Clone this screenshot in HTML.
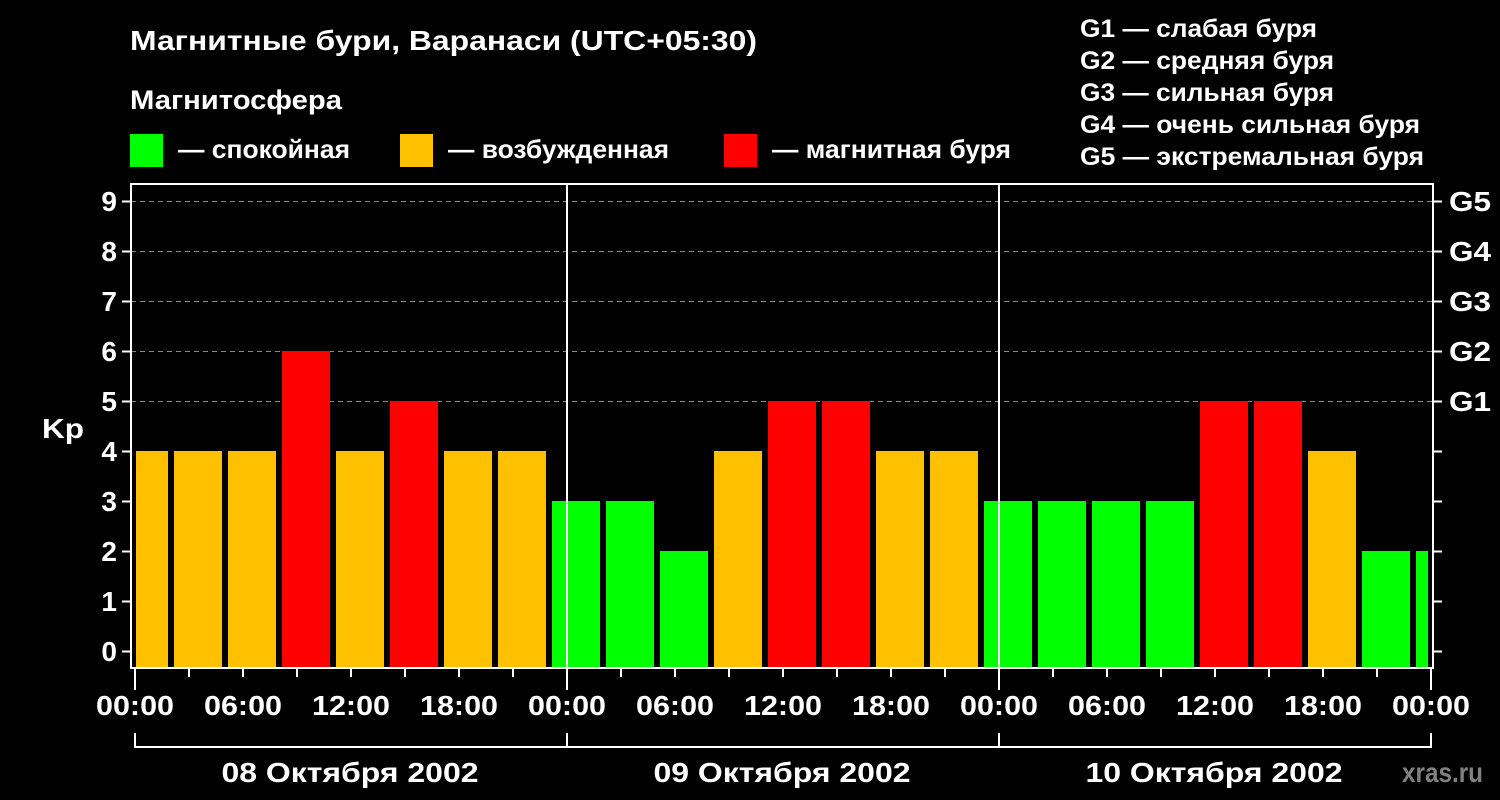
<!DOCTYPE html>
<html><head><meta charset="utf-8"><style>
body{margin:0;background:#000;width:1500px;height:800px;overflow:hidden}
svg{display:block}
text{font-family:"Liberation Sans",sans-serif;font-weight:bold;fill:#fff}
</style></head><body>
<svg width="1500" height="800" xmlns="http://www.w3.org/2000/svg">
<text x="130" y="50" font-size="28" textLength="627" lengthAdjust="spacingAndGlyphs">Магнитные бури, Варанаси (UTC+05:30)</text>
<text x="130" y="109" font-size="27" textLength="212" lengthAdjust="spacingAndGlyphs">Магнитосфера</text>
<rect x="130" y="134" width="33" height="33" fill="#00ff00"/>
<text x="178" y="158" font-size="26" textLength="172" lengthAdjust="spacingAndGlyphs">— спокойная</text>
<rect x="400" y="134" width="33" height="33" fill="#ffc000"/>
<text x="448" y="158" font-size="26" textLength="221" lengthAdjust="spacingAndGlyphs">— возбужденная</text>
<rect x="724" y="134" width="33" height="33" fill="#ff0000"/>
<text x="772" y="158" font-size="26" textLength="239" lengthAdjust="spacingAndGlyphs">— магнитная буря</text>
<g font-size="25" lengthAdjust="spacingAndGlyphs">
<text x="1080" y="37" textLength="237" lengthAdjust="spacingAndGlyphs">G1 — слабая буря</text>
<text x="1080" y="69" textLength="254" lengthAdjust="spacingAndGlyphs">G2 — средняя буря</text>
<text x="1080" y="101" textLength="254" lengthAdjust="spacingAndGlyphs">G3 — сильная буря</text>
<text x="1080" y="133" textLength="340" lengthAdjust="spacingAndGlyphs">G4 — очень сильная буря</text>
<text x="1080" y="165" textLength="344" lengthAdjust="spacingAndGlyphs">G5 — экстремальная буря</text>
</g>
<g stroke="#888" stroke-width="1" stroke-dasharray="5,4">
<line x1="131" y1="201.5" x2="1432" y2="201.5"/>
<line x1="131" y1="251.5" x2="1432" y2="251.5"/>
<line x1="131" y1="301.5" x2="1432" y2="301.5"/>
<line x1="131" y1="351.5" x2="1432" y2="351.5"/>
<line x1="131" y1="401.5" x2="1432" y2="401.5"/>
</g>
<g>
<rect x="136" y="451" width="32" height="217" fill="#ffc000"/>
<rect x="174" y="451" width="48" height="217" fill="#ffc000"/>
<rect x="228" y="451" width="48" height="217" fill="#ffc000"/>
<rect x="282" y="351" width="48" height="317" fill="#ff0000"/>
<rect x="336" y="451" width="48" height="217" fill="#ffc000"/>
<rect x="390" y="401" width="48" height="267" fill="#ff0000"/>
<rect x="444" y="451" width="48" height="217" fill="#ffc000"/>
<rect x="498" y="451" width="48" height="217" fill="#ffc000"/>
<rect x="552" y="501" width="48" height="167" fill="#00ff00"/>
<rect x="606" y="501" width="48" height="167" fill="#00ff00"/>
<rect x="660" y="551" width="48" height="117" fill="#00ff00"/>
<rect x="714" y="451" width="48" height="217" fill="#ffc000"/>
<rect x="768" y="401" width="48" height="267" fill="#ff0000"/>
<rect x="822" y="401" width="48" height="267" fill="#ff0000"/>
<rect x="876" y="451" width="48" height="217" fill="#ffc000"/>
<rect x="930" y="451" width="48" height="217" fill="#ffc000"/>
<rect x="984" y="501" width="48" height="167" fill="#00ff00"/>
<rect x="1038" y="501" width="48" height="167" fill="#00ff00"/>
<rect x="1092" y="501" width="48" height="167" fill="#00ff00"/>
<rect x="1146" y="501" width="48" height="167" fill="#00ff00"/>
<rect x="1200" y="401" width="48" height="267" fill="#ff0000"/>
<rect x="1254" y="401" width="48" height="267" fill="#ff0000"/>
<rect x="1308" y="451" width="48" height="217" fill="#ffc000"/>
<rect x="1362" y="551" width="48" height="117" fill="#00ff00"/>
<rect x="1416" y="551" width="12" height="117" fill="#00ff00"/>
</g>
<g stroke="#fff" stroke-width="2" fill="none">
<rect x="131" y="184" width="1302" height="484"/>
<line x1="567" y1="184" x2="567" y2="690"/>
<line x1="999" y1="184" x2="999" y2="690"/>
<line x1="135" y1="668" x2="135" y2="690"/>
<line x1="1431" y1="668" x2="1431" y2="690"/>
<path d="M135 733V747H1431V733M567 733V747M999 733V747"/>
<path d="M189 668v9M243 668v9M297 668v9M351 668v9M405 668v9M459 668v9M513 668v9M621 668v9M675 668v9M729 668v9M783 668v9M837 668v9M891 668v9M945 668v9M1053 668v9M1107 668v9M1161 668v9M1215 668v9M1269 668v9M1323 668v9M1377 668v9"/>
<path d="M122 201.5h9M122 251.5h9M122 301.5h9M122 351.5h9M122 401.5h9M122 451.5h9M122 501.5h9M122 551.5h9M122 601.5h9M122 651.5h9"/>
<path d="M1433 201.5h9M1433 251.5h9M1433 301.5h9M1433 351.5h9M1433 401.5h9M1433 451.5h9M1433 501.5h9M1433 551.5h9M1433 601.5h9M1433 651.5h9"/>
</g>
<g font-size="28" text-anchor="end">
<text x="117" y="211">9</text><text x="117" y="261">8</text><text x="117" y="311">7</text>
<text x="117" y="361">6</text><text x="117" y="411">5</text><text x="117" y="461">4</text>
<text x="117" y="511">3</text><text x="117" y="561">2</text><text x="117" y="611">1</text>
<text x="117" y="661">0</text>
</g>
<text x="42" y="438" font-size="28" textLength="42" lengthAdjust="spacingAndGlyphs">Kp</text>
<g font-size="28">
<text x="1449" y="211" textLength="42" lengthAdjust="spacingAndGlyphs">G5</text>
<text x="1449" y="261" textLength="42" lengthAdjust="spacingAndGlyphs">G4</text>
<text x="1449" y="311" textLength="42" lengthAdjust="spacingAndGlyphs">G3</text>
<text x="1449" y="361" textLength="42" lengthAdjust="spacingAndGlyphs">G2</text>
<text x="1449" y="411" textLength="42" lengthAdjust="spacingAndGlyphs">G1</text>
</g>
<g font-size="28" text-anchor="middle">
<text x="135" y="715" textLength="78" lengthAdjust="spacingAndGlyphs">00:00</text>
<text x="243" y="715" textLength="78" lengthAdjust="spacingAndGlyphs">06:00</text>
<text x="351" y="715" textLength="78" lengthAdjust="spacingAndGlyphs">12:00</text>
<text x="459" y="715" textLength="78" lengthAdjust="spacingAndGlyphs">18:00</text>
<text x="567" y="715" textLength="78" lengthAdjust="spacingAndGlyphs">00:00</text>
<text x="675" y="715" textLength="78" lengthAdjust="spacingAndGlyphs">06:00</text>
<text x="783" y="715" textLength="78" lengthAdjust="spacingAndGlyphs">12:00</text>
<text x="891" y="715" textLength="78" lengthAdjust="spacingAndGlyphs">18:00</text>
<text x="999" y="715" textLength="78" lengthAdjust="spacingAndGlyphs">00:00</text>
<text x="1107" y="715" textLength="78" lengthAdjust="spacingAndGlyphs">06:00</text>
<text x="1215" y="715" textLength="78" lengthAdjust="spacingAndGlyphs">12:00</text>
<text x="1323" y="715" textLength="78" lengthAdjust="spacingAndGlyphs">18:00</text>
<text x="1431" y="715" textLength="78" lengthAdjust="spacingAndGlyphs">00:00</text>
<text x="350" y="782" textLength="257" lengthAdjust="spacingAndGlyphs">08 Октября 2002</text>
<text x="782" y="782" textLength="257" lengthAdjust="spacingAndGlyphs">09 Октября 2002</text>
<text x="1214" y="782" textLength="257" lengthAdjust="spacingAndGlyphs">10 Октября 2002</text>
</g>
<text x="1402" y="782" font-size="28" textLength="81" lengthAdjust="spacingAndGlyphs" style="fill:#808080">xras.ru</text>
</svg>
</body></html>
